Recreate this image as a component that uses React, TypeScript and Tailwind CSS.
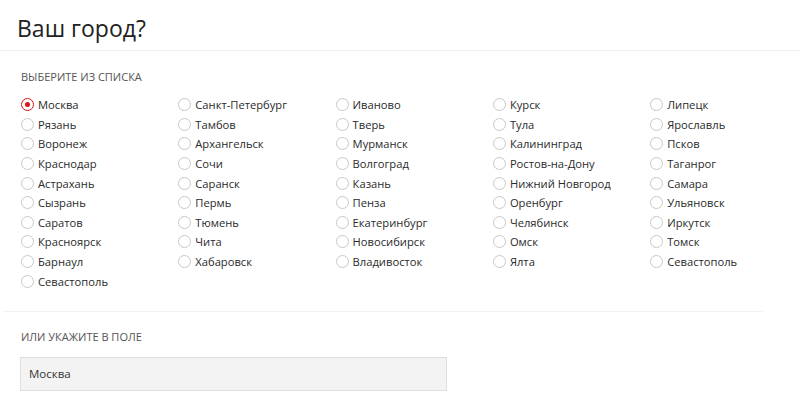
import { useState } from 'react';

const cities = [
  'Москва', 'Санкт-Петербург', 'Иваново', 'Курск', 'Липецк',
  'Рязань', 'Тамбов', 'Тверь', 'Тула', 'Ярославль',
  'Воронеж', 'Архангельск', 'Мурманск', 'Калининград', 'Псков',
  'Краснодар', 'Сочи', 'Волгоград', 'Ростов-на-Дону', 'Таганрог',
  'Астрахань', 'Саранск', 'Казань', 'Нижний Новгород', 'Самара',
  'Сызрань', 'Пермь', 'Пенза', 'Оренбург', 'Ульяновск',
  'Саратов', 'Тюмень', 'Екатеринбург', 'Челябинск', 'Иркутск',
  'Красноярск', 'Чита', 'Новосибирск', 'Омск', 'Томск',
  'Барнаул', 'Хабаровск', 'Владивосток', 'Ялта', 'Севастополь',
  'Севастополь',
];

export default function App() {
  const [selected, setSelected] = useState(0);
  const [city, setCity] = useState('Москва');

  return (
    <div className="w-[800px] h-[416px] bg-white text-[#333] overflow-hidden" style={{ fontFamily: '"Open Sans", sans-serif' }}>
      <div className="h-[51px] border-b border-[#efefef] px-[17px] flex items-center">
        <h1 className="text-[23px] text-[#222] leading-none pt-[7px]">Ваш город?</h1>
      </div>

      <div className="pl-[21px] pt-[19px]">
        <div className="text-[11px] text-[#555] uppercase leading-[14px]">Выберите из списка</div>
        <div className="grid grid-cols-[repeat(5,157.3px)] mt-[11px]">
          {cities.map((name, i) => (
            <label
              key={i}
              className="flex items-center h-[19.6px] cursor-pointer"
              onClick={() => {
                setSelected(i);
                setCity(name);
              }}
            >
              <span
                className={
                  'w-[13px] h-[13px] rounded-full border flex items-center justify-center shrink-0 ' +
                  (selected === i ? 'border-[#d7141a]' : 'border-[#c8c8c8]')
                }
              >
                {selected === i && <span className="w-[5px] h-[5px] rounded-full bg-[#d7141a]" />}
              </span>
              <span className="ml-[4px] text-[11.2px] text-[#2a2a2a] leading-none">{name}</span>
            </label>
          ))}
        </div>
      </div>

      <div className="ml-[3px] w-[760px] h-px bg-[#f1f1f1] mt-[20px]" />

      <div className="pl-[21px] pt-[18px]">
        <div className="text-[11px] text-[#555] uppercase leading-[14px]">Или укажите в поле</div>
        <input
          value={city}
          onChange={(e) => setCity(e.target.value)}
          className="mt-[13px] -ml-px w-[427px] h-[34px] bg-[#f3f3f3] border border-[#dedede] px-[8px] text-[11.5px] text-[#333] outline-none"
        />
      </div>
    </div>
  );
}
